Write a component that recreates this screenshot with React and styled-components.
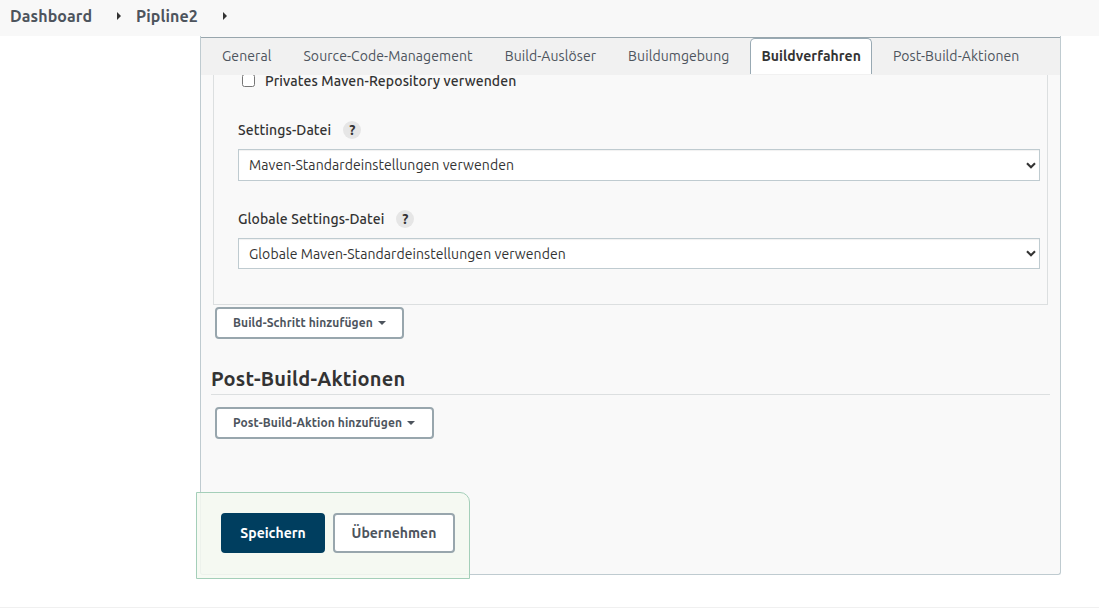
import React from "react";
import styled, { createGlobalStyle, css } from "styled-components";

const GlobalStyle = createGlobalStyle`
  *, *::before, *::after { box-sizing: border-box; }
  body {
    margin: 0;
    background: #fff;
    color: #333;
    font: 14px/20px Ubuntu, "Noto Sans", "Open Sans", sans-serif;
  }
  button { font-family: inherit; }
`;

const Page = styled.div`
  display: flex;
  flex-direction: column;
  height: 608px;
  overflow: hidden;
`;

const Breadcrumbs = styled.nav`
  display: flex;
  align-items: center;
  flex: none;
  height: 36px;
  padding: 0 0 4px 10px;
  background: #f8f8f8;
`;

const Crumb = styled.a`
  width: ${(p) => p.$width}px;
  color: #4d545d;
  font-size: 16px;
  font-weight: 700;
  letter-spacing: 0.1px;
  white-space: nowrap;
`;

const CrumbArrow = styled.svg`
  width: 4px;
  height: 8px;
  margin: 0 15px 0 24px;
  fill: #333;
`;

const Main = styled.main`
  display: flex;
  flex: 1;
  padding: 0 38px 32px 200px;
`;

const Panel = styled.section`
  position: relative;
  flex: 1;
  display: flex;
  flex-direction: column;
  border: solid #bfcbd0;
  border-width: 0 1px 1px;
  border-radius: 0 0 3px 3px;
  background: #f9f9f9;
`;

const TabBar = styled.div`
  position: relative;
  z-index: 1;
  display: flex;
  gap: 10px;
  flex: none;
  height: 38px;
  margin-top: 1px;
  padding-left: 10px;
  border-top: 1px solid #98a6ad;
  background: #f1f1f1;
`;

const Tab = styled.a`
  height: 36px;
  padding: 8px 10px 0;
  border: 1px solid transparent;
  border-bottom: 0;
  color: #4d545d;
  line-height: 18px;
  letter-spacing: 0.08px;
  white-space: nowrap;
  ${(p) =>
    p.$active &&
    css`
      border-color: #98a9b3;
      border-radius: 5px 5px 0 0;
      background: #fff;
      color: #333;
      font-weight: 700;
    `}
`;

const StepBox = styled.div`
  flex: none;
  height: 230px;
  margin: 0 12px;
  padding: 0 7px 0 24px;
  border: solid #dcdfe0;
  border-width: 0 1px 1px;
`;

const CheckLabel = styled.label`
  display: flex;
  align-items: flex-start;
  gap: 10px;
  height: 35px;
  padding-left: 4px;
  font-weight: 500;
  line-height: 12px;
  letter-spacing: 0.13px;
`;

const Checkbox = styled.input`
  width: 13px;
  height: 13px;
  margin: -1px 0 0;
`;

const Field = styled.div`
  height: 89px;
  padding-top: 11px;
`;

const FieldLabel = styled.div`
  display: flex;
  align-items: center;
  gap: 12px;
  height: 18px;
  font-weight: 500;
  letter-spacing: 0.1px;
`;

const Help = styled.span`
  width: 18px;
  height: 18px;
  border-radius: 50%;
  background: #e6e6e6;
  font-size: 14px;
  font-weight: 700;
  line-height: 18px;
  text-align: center;
`;

const Select = styled.div`
  display: flex;
  align-items: center;
  justify-content: space-between;
  height: ${(p) => p.$height}px;
  margin-top: 10px;
  padding: 0 3px 0 10px;
  border: 1px solid #bfcbd0;
  background: #fff;
  box-shadow: inset 0 1px 1px rgba(0, 0, 0, 0.06);
  letter-spacing: 0.08px;
`;

const Chevron = styled.svg`
  width: 10px;
  height: 7px;
  fill: none;
  stroke: #333;
  stroke-width: 2.1;
`;

const Button = styled.button`
  height: 40px;
  padding: 0 16px;
  border: 2px solid #98a6ad;
  border-radius: 4px;
  background: #fff;
  color: #4d545d;
  font-size: 14px;
  font-weight: 700;
  white-space: nowrap;
  ${(p) =>
    p.$primary &&
    css`
      border-color: #003e5f;
      background: #003e5f;
      color: #fff;
    `}
  width: ${(p) => p.$width}px;
`;

const MenuButton = styled(Button)`
  display: flex;
  align-items: center;
  gap: 5px;
  flex: none;
  height: 32px;
  margin-left: 14px;
  padding-bottom: 2px;
  font-size: 12px;
  letter-spacing: 0.1px;
`;

const Caret = styled.svg`
  flex: none;
  width: 8px;
  height: 4px;
  margin-top: 2px;
  fill: #4d545d;
`;

const AddRow = styled.div`
  flex: none;
  padding-top: 2px;
`;

const SectionTitle = styled.h2`
  height: 28px;
  margin: 28px 10px 10px;
  border-bottom: 1px solid #dcdfe0;
  font-size: 20px;
  font-weight: 700;
  line-height: 24px;
  letter-spacing: 0.22px;
`;

const SaveBar = styled.div`
  position: absolute;
  left: -5px;
  bottom: -5px;
  display: flex;
  gap: 8px;
  width: 274px;
  height: 87px;
  padding: 20px 0 0 24px;
  border: 1px solid #a4cfb9;
  border-radius: 0 10px 0 0;
  background: rgba(245, 249, 241, 0.85);
`;

const FooterLine = styled.footer`
  flex: none;
  height: 1px;
  background: #f0f0f0;
`;

const tabs = [
  "General",
  "Source-Code-Management",
  "Build-Auslöser",
  "Buildumgebung",
  "Buildverfahren",
  "Post-Build-Aktionen",
];

function Breadcrumb({ children, width }) {
  return (
    <>
      <Crumb $width={width}>{children}</Crumb>
      <CrumbArrow viewBox="0 0 4 8">
        <path d="M0 0L4 4L0 8Z" />
      </CrumbArrow>
    </>
  );
}

function SettingsField({ label, value, height }) {
  return (
    <Field>
      <FieldLabel>
        {label}
        <Help>?</Help>
      </FieldLabel>
      <Select $height={height}>
        {value}
        <Chevron viewBox="0 0 10 7">
          <path d="M1 1.2L5 5.2L9 1.2" />
        </Chevron>
      </Select>
    </Field>
  );
}

function AddButton({ children, width }) {
  return (
    <AddRow>
      <MenuButton $width={width}>
        {children}
        <Caret viewBox="0 0 8 4">
          <path d="M0 0H8L4 4Z" />
        </Caret>
      </MenuButton>
    </AddRow>
  );
}

export default function App() {
  return (
    <Page>
      <GlobalStyle />
      <Breadcrumbs>
        <Breadcrumb width={83}>Dashboard</Breadcrumb>
        <Breadcrumb width={63}>Pipline2</Breadcrumb>
      </Breadcrumbs>
      <Main>
        <Panel>
          <TabBar>
            {tabs.map((t) => (
              <Tab key={t} $active={t === "Buildverfahren"}>
                {t}
              </Tab>
            ))}
          </TabBar>
          <StepBox>
            <CheckLabel>
              <Checkbox type="checkbox" />
              Privates Maven-Repository verwenden
            </CheckLabel>
            <SettingsField
              label="Settings-Datei"
              value="Maven-Standardeinstellungen verwenden"
              height={32}
            />
            <SettingsField
              label="Globale Settings-Datei"
              value="Globale Maven-Standardeinstellungen verwenden"
              height={31}
            />
          </StepBox>
          <AddButton width={189}>Build-Schritt hinzufügen</AddButton>
          <SectionTitle>Post-Build-Aktionen</SectionTitle>
          <AddButton width={219}>Post-Build-Aktion hinzufügen</AddButton>
          <SaveBar>
            <Button $primary $width={104}>Speichern</Button>
            <Button $width={122}>Übernehmen</Button>
          </SaveBar>
        </Panel>
      </Main>
      <FooterLine />
    </Page>
  );
}
